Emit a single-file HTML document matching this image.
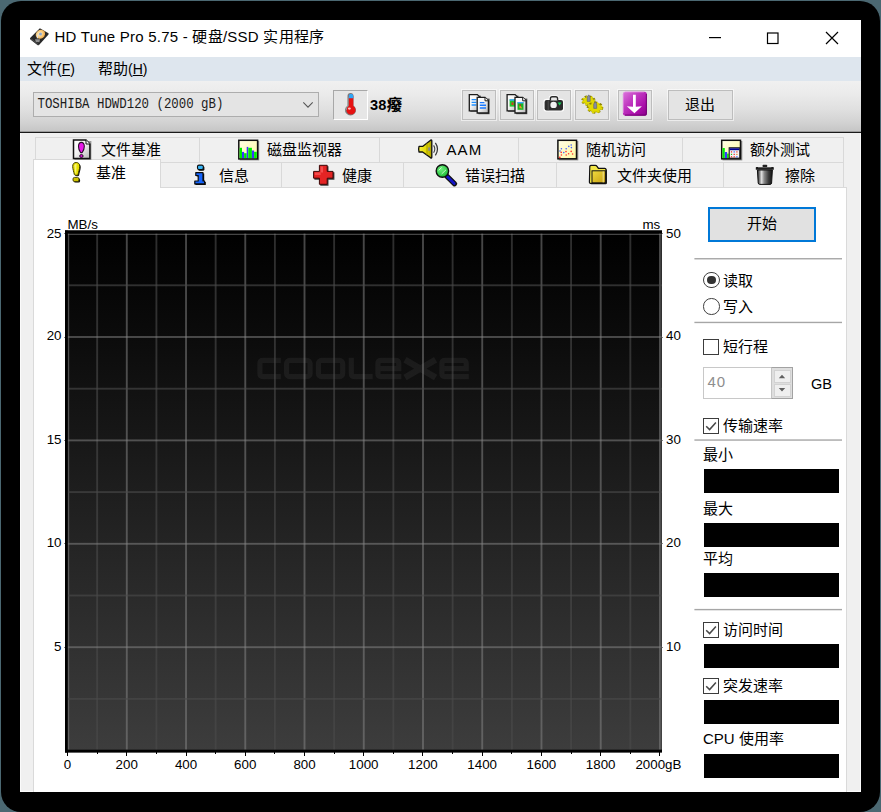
<!DOCTYPE html>
<html lang="zh-CN">
<head>
<meta charset="utf-8">
<title>HD Tune Pro 5.75</title>
<style>
html,body{margin:0;padding:0}
body{width:881px;height:812px;overflow:hidden;background:#4b6872;position:relative;font-family:"Liberation Sans",sans-serif;font-size:15px;color:#000}
div,span{box-sizing:border-box}
.abs,.frame,.win,.t,.tab,.box,.sep,.cb,.rb,.tbtn,.ico{position:absolute}
.frame{left:1px;top:1px;width:879px;height:810.5px;background:#000;border-radius:20px}
.win{left:20px;top:20px;width:841px;height:772px;background:#f0f0f0;overflow:hidden}
.t{white-space:nowrap;line-height:20px;height:20px}
/* title */
#title{left:0;top:0;width:841px;height:37px;background:#fff}
#menu{left:0;top:37px;width:841px;height:24px;background:#dee6ee}
#tool{left:0;top:61px;width:841px;height:51px;background:linear-gradient(#f0f0f0 0%,#ebebeb 25%,#e0e0e0 55%,#d3d3d3 80%,#c5c5c5 100%)}
#toolline{left:0;top:111px;width:841px;height:2px;background:linear-gradient(rgba(0,0,0,.22) 0 50%,#1a1a1a 50% 100%)}
#edgeL{left:0;top:113px;width:1px;height:660px;background:#fbfbfb}
#edgeR{left:840px;top:113px;width:1px;height:660px;background:#fbfbfb}
/* tabs */
.tab{background:#f0f0f0;border:1px solid #d9d9d9;border-bottom:none}
.tab.sel{background:#fff}
#page{left:13px;top:167px;width:814px;height:610px;background:#fff;border:1px solid #dadada;border-bottom:none}
/* chart */
#chart{left:65px;top:230px;width:597px;height:523px;overflow:hidden}
.yl,.yr,.xl{position:absolute;font-size:13.33px;line-height:16px;height:16px;white-space:nowrap}
.yl{left:30px;width:31.5px;text-align:right}
.yr{left:666px;text-align:left}
.xl{width:60px;text-align:center;top:756.5px}
.tk{position:absolute;background:#000}
.box{background:#000;left:703.5px;width:135px;height:24px}
.cb{left:703.2px;width:16px;height:16px;border:1.2px solid #3c3c3c;background:#fff}
.rb{left:703.2px;width:16.4px;height:16.4px;border:1.3px solid #404040;background:#fff;border-radius:50%}
.tbtn{top:89.5px;width:34px;height:30px;border:1px solid #bdbdbd;background:#e4e4e4;box-shadow:0 0 0 1px rgba(255,255,255,.55)}
</style>
</head>
<body>
<div class="frame"></div>
<div class="win">
  <div class="abs" id="title"></div>
  <div class="abs" id="menu"></div>
  <div class="abs" id="tool"></div>
  <div class="abs" id="toolline"></div>
  <div class="abs" id="edgeL"></div>
  <div class="abs" id="edgeR"></div>
  <div class="abs" style="left:0;top:771px;width:841px;height:1px;background:#fbfbfb"></div>
  <!-- tab row 1 -->
  <div class="tab" style="left:15px;top:117px;width:165px;height:26px"></div>
  <div class="tab" style="left:179px;top:117px;width:181px;height:26px"></div>
  <div class="tab" style="left:359px;top:117px;width:140px;height:26px"></div>
  <div class="tab" style="left:498px;top:117px;width:165px;height:26px"></div>
  <div class="tab" style="left:662px;top:117px;width:162px;height:26px"></div>
  <!-- tab row 2 -->
  <div class="tab" style="left:140px;top:142px;width:122px;height:26px"></div>
  <div class="tab" style="left:261px;top:142px;width:123px;height:26px"></div>
  <div class="tab" style="left:383px;top:142px;width:154px;height:26px"></div>
  <div class="tab" style="left:536px;top:142px;width:168px;height:26px"></div>
  <div class="tab" style="left:703px;top:142px;width:121px;height:26px"></div>
  <div class="abs" id="page"></div>
  <div class="tab sel" style="left:13px;top:139px;width:128px;height:29px"></div>
</div>

<!-- title text -->
<div class="t" id="ttl" style="left:54.5px;top:27px;font-size:15px;letter-spacing:.24px">HD Tune Pro 5.75 - 硬盘/SSD 实用程序</div>
<!-- menu -->
<div class="t" id="m1" style="left:27px;top:58.5px">文件<span style="font-size:14px">(<u>F</u>)</span></div>
<div class="t" id="m2" style="left:98px;top:58.5px">帮助<span style="font-size:14px">(<u>H</u>)</span></div>

<!-- combo -->
<div class="abs" style="left:33px;top:92px;width:285.5px;height:24.5px;border:1px solid #adadad;background:#e4e4e4"></div>
<div class="t" id="combo" style="left:37.5px;top:94.5px;font-family:'Liberation Mono',monospace;font-size:12.4px;color:#1c1c1c;transform:scaleY(1.14);transform-origin:0 74%">TOSHIBA HDWD120 (2000 gB)</div>
<svg class="abs" style="left:301px;top:100px" width="14" height="10" viewBox="0 0 14 10"><path d="M2.3 2.4 L7 7.2 L11.7 2.4" fill="none" stroke="#555" stroke-width="1.05"/></svg>

<!-- temperature -->
<div class="abs" style="left:333px;top:89.5px;width:34.5px;height:30.5px;border:1px solid #a8a8a8;border-right-color:#fff;border-bottom-color:#fff;background:#e6e6e6"></div>
<div class="t" id="temp" style="left:370px;top:94.5px;font-weight:bold;font-size:14.6px;letter-spacing:.2px">38<span style="font-size:15px;font-weight:900;letter-spacing:0">癈</span></div>

<!-- toolbar buttons -->
<div class="tbtn" style="left:462px"></div>
<div class="tbtn" style="left:499.5px"></div>
<div class="tbtn" style="left:537px"></div>
<div class="tbtn" style="left:574.5px"></div>
<div class="tbtn" style="left:618px"></div>
<div class="tbtn" style="left:668px;width:65px"></div>
<div class="t" id="exit" style="left:685px;top:94.5px">退出</div>

<!-- tab labels row 1 -->
<div class="t" style="left:101px;top:140px">文件基准</div>
<div class="t" style="left:266.5px;top:140px">磁盘监视器</div>
<div class="t" style="left:446.5px;top:140px;letter-spacing:1.1px">AAM</div>
<div class="t" style="left:586px;top:140px">随机访问</div>
<div class="t" style="left:749.5px;top:140px">额外测试</div>
<!-- tab labels row 2 -->
<div class="t" style="left:95.5px;top:163px">基准</div>
<div class="t" style="left:218.5px;top:165.5px">信息</div>
<div class="t" style="left:342px;top:165.5px">健康</div>
<div class="t" style="left:464.5px;top:165.5px">错误扫描</div>
<div class="t" style="left:617px;top:165.5px">文件夹使用</div>
<div class="t" style="left:785px;top:165.5px">擦除</div>

<!-- chart -->
<div class="abs" id="chart">
<svg class="abs" id="wm" style="left:0;top:0" width="597" height="523" viewBox="65 230 597 523"><defs><linearGradient id="gbg" x1="0" y1="0" x2="0" y2="1"><stop offset="0" stop-color="#000"/><stop offset=".2" stop-color="#0b0b0b"/><stop offset="1" stop-color="#3d3d3d"/></linearGradient></defs><rect x="65" y="230.5" width="597" height="522" fill="url(#gbg)"/><g fill="none" stroke="#fff" stroke-opacity=".055" stroke-width="5.2">
<path d="M280.8 360.4 H263 Q259.9 360.4 259.9 363.5 V373.6 Q259.9 376.7 263 376.7 H280.8"/>
<rect x="286.6" y="360.4" width="23.5" height="16.3" rx="3.2"/>
<rect x="318.4" y="360.4" width="24.3" height="16.3" rx="3.2"/>
<path d="M351.3 357.8 V373.6 Q351.3 376.7 354.4 376.7 H372.7"/>
<path d="M401.4 376.7 H381 Q377.9 376.7 377.9 373.6 V363.5 Q377.9 360.4 381 360.4 H395.7 Q398.8 360.4 398.8 363.5 V368.6 H380.5"/>
<path d="M405 359.8 L435.6 377.4 M435.6 359.8 L405 377.4" stroke-width="6.4"/>
<path d="M468.8 376.7 H445 Q441.9 376.7 441.9 373.6 V363.5 Q441.9 360.4 445 360.4 H463.1 Q466.2 360.4 466.2 363.5 V368.6 H444.5"/>
</g></svg>
<svg class="abs" style="left:0;top:0" width="597" height="523" viewBox="65 230 597 523">
<rect x="67.70" y="233.2" width="1.5" height="517" fill="#868686" fill-opacity=".52"/>
<rect x="96.22" y="233.2" width="1.9" height="517" fill="#4a4a4a" fill-opacity=".62"/>
<rect x="125.84" y="233.2" width="1.9" height="517" fill="#868686" fill-opacity=".52"/>
<rect x="155.46" y="233.2" width="1.9" height="517" fill="#4a4a4a" fill-opacity=".62"/>
<rect x="185.08" y="233.2" width="1.9" height="517" fill="#868686" fill-opacity=".52"/>
<rect x="214.70" y="233.2" width="1.9" height="517" fill="#4a4a4a" fill-opacity=".62"/>
<rect x="244.32" y="233.2" width="1.9" height="517" fill="#868686" fill-opacity=".52"/>
<rect x="273.94" y="233.2" width="1.9" height="517" fill="#4a4a4a" fill-opacity=".62"/>
<rect x="303.56" y="233.2" width="1.9" height="517" fill="#868686" fill-opacity=".52"/>
<rect x="333.18" y="233.2" width="1.9" height="517" fill="#4a4a4a" fill-opacity=".62"/>
<rect x="362.80" y="233.2" width="1.9" height="517" fill="#868686" fill-opacity=".52"/>
<rect x="392.42" y="233.2" width="1.9" height="517" fill="#4a4a4a" fill-opacity=".62"/>
<rect x="422.04" y="233.2" width="1.9" height="517" fill="#868686" fill-opacity=".52"/>
<rect x="451.66" y="233.2" width="1.9" height="517" fill="#4a4a4a" fill-opacity=".62"/>
<rect x="481.28" y="233.2" width="1.9" height="517" fill="#868686" fill-opacity=".52"/>
<rect x="510.90" y="233.2" width="1.9" height="517" fill="#4a4a4a" fill-opacity=".62"/>
<rect x="540.52" y="233.2" width="1.9" height="517" fill="#868686" fill-opacity=".52"/>
<rect x="570.14" y="233.2" width="1.9" height="517" fill="#4a4a4a" fill-opacity=".62"/>
<rect x="599.76" y="233.2" width="1.9" height="517" fill="#868686" fill-opacity=".52"/>
<rect x="629.38" y="233.2" width="1.9" height="517" fill="#4a4a4a" fill-opacity=".62"/>
<rect x="659.00" y="233.2" width="1.9" height="517" fill="#868686" fill-opacity=".52"/>
<rect x="67.5" y="233.50" width="594.5" height="1.5" fill="#868686" fill-opacity=".52"/>
<rect x="67.5" y="284.35" width="594.5" height="1.9" fill="#4a4a4a" fill-opacity=".62"/>
<rect x="67.5" y="336.05" width="594.5" height="1.9" fill="#868686" fill-opacity=".52"/>
<rect x="67.5" y="387.75" width="594.5" height="1.9" fill="#4a4a4a" fill-opacity=".62"/>
<rect x="67.5" y="439.45" width="594.5" height="1.9" fill="#868686" fill-opacity=".52"/>
<rect x="67.5" y="491.15" width="594.5" height="1.9" fill="#4a4a4a" fill-opacity=".62"/>
<rect x="67.5" y="542.85" width="594.5" height="1.9" fill="#868686" fill-opacity=".52"/>
<rect x="67.5" y="594.55" width="594.5" height="1.9" fill="#4a4a4a" fill-opacity=".62"/>
<rect x="67.5" y="646.25" width="594.5" height="1.9" fill="#868686" fill-opacity=".52"/>
<rect x="67.5" y="697.95" width="594.5" height="1.9" fill="#4a4a4a" fill-opacity=".62"/>
<rect x="67.5" y="749.65" width="594.5" height="1.9" fill="#868686" fill-opacity=".52"/>
<rect x="660.6" y="233.2" width="1.4" height="517" fill="#484848" fill-opacity=".62"/>
<rect x="65" y="230.5" width="2.7" height="522" fill="#000"/><rect x="65" y="230.5" width="597" height="3" fill="#000"/><rect x="65" y="749.6" width="597" height="2.8" fill="#000"/>
</svg>
</div>
<div class="yl" style="left:67.5px;top:216.5px;width:auto">MB/s</div>
<div class="yl" style="left:642.5px;top:216.5px;width:auto">ms</div>
<div class="yl" style="top:226.0px">25</div>
<div class="tk" style="left:63.6px;top:233.2px;width:1.5px;height:1px;background:#8a8a8a"></div>
<div class="yl" style="top:328.4px">20</div>
<div class="tk" style="left:63.6px;top:336.6px;width:1.5px;height:1px;background:#8a8a8a"></div>
<div class="yl" style="top:431.8px">15</div>
<div class="tk" style="left:63.6px;top:440.0px;width:1.5px;height:1px;background:#8a8a8a"></div>
<div class="yl" style="top:535.2px">10</div>
<div class="tk" style="left:63.6px;top:543.4px;width:1.5px;height:1px;background:#8a8a8a"></div>
<div class="yl" style="top:638.6px">5</div>
<div class="tk" style="left:63.6px;top:646.8px;width:1.5px;height:1px;background:#8a8a8a"></div>
<div class="yr" style="top:226.0px">50</div>
<div class="tk" style="left:661.8px;top:233.2px;width:1.6px;height:1px;background:#8a8a8a"></div>
<div class="yr" style="top:328.4px">40</div>
<div class="tk" style="left:661.8px;top:336.6px;width:1.6px;height:1px;background:#8a8a8a"></div>
<div class="yr" style="top:431.8px">30</div>
<div class="tk" style="left:661.8px;top:440.0px;width:1.6px;height:1px;background:#8a8a8a"></div>
<div class="yr" style="top:535.2px">20</div>
<div class="tk" style="left:661.8px;top:543.4px;width:1.6px;height:1px;background:#8a8a8a"></div>
<div class="yr" style="top:638.6px">10</div>
<div class="tk" style="left:661.8px;top:646.8px;width:1.6px;height:1px;background:#8a8a8a"></div>
<div class="xl" style="left:37.5px">0</div>
<div class="tk" style="left:67.0px;top:752px;width:1px;height:4px"></div>
<div class="tk" style="left:96.6px;top:752px;width:1px;height:2px"></div>
<div class="xl" style="left:96.7px">200</div>
<div class="tk" style="left:126.2px;top:752px;width:1px;height:4px"></div>
<div class="tk" style="left:155.9px;top:752px;width:1px;height:2px"></div>
<div class="xl" style="left:156.0px">400</div>
<div class="tk" style="left:185.5px;top:752px;width:1px;height:4px"></div>
<div class="tk" style="left:215.1px;top:752px;width:1px;height:2px"></div>
<div class="xl" style="left:215.2px">600</div>
<div class="tk" style="left:244.7px;top:752px;width:1px;height:4px"></div>
<div class="tk" style="left:274.3px;top:752px;width:1px;height:2px"></div>
<div class="xl" style="left:274.5px">800</div>
<div class="tk" style="left:304.0px;top:752px;width:1px;height:4px"></div>
<div class="tk" style="left:333.6px;top:752px;width:1px;height:2px"></div>
<div class="xl" style="left:333.7px">1000</div>
<div class="tk" style="left:363.2px;top:752px;width:1px;height:4px"></div>
<div class="tk" style="left:392.8px;top:752px;width:1px;height:2px"></div>
<div class="xl" style="left:392.9px">1200</div>
<div class="tk" style="left:422.4px;top:752px;width:1px;height:4px"></div>
<div class="tk" style="left:452.1px;top:752px;width:1px;height:2px"></div>
<div class="xl" style="left:452.2px">1400</div>
<div class="tk" style="left:481.7px;top:752px;width:1px;height:4px"></div>
<div class="tk" style="left:511.3px;top:752px;width:1px;height:2px"></div>
<div class="xl" style="left:511.4px">1600</div>
<div class="tk" style="left:540.9px;top:752px;width:1px;height:4px"></div>
<div class="tk" style="left:570.5px;top:752px;width:1px;height:2px"></div>
<div class="xl" style="left:570.7px">1800</div>
<div class="tk" style="left:600.2px;top:752px;width:1px;height:4px"></div>
<div class="tk" style="left:629.8px;top:752px;width:1px;height:2px"></div>
<div class="xl" style="left:628.4px">2000gB</div>
<div class="tk" style="left:659.4px;top:752px;width:1px;height:4px"></div>

<!-- right panel -->
<div class="abs" style="left:708px;top:207px;width:108px;height:35px;border:2px solid #0078d7;background:#e1e1e1"></div>
<div class="t" style="left:746.5px;top:214px">开始</div>

<div class="rb" style="top:271.8px"></div><div class="abs" style="left:707.2px;top:275.8px;width:8.4px;height:8.4px;border-radius:50%;background:#333"></div>
<div class="t" style="left:722.6px;top:270.5px">读取</div>
<div class="rb" style="top:298.3px"></div>
<div class="t" style="left:722.6px;top:296.8px">写入</div>

<div class="cb" style="top:338.5px"></div>
<div class="t" style="left:723px;top:336.5px">短行程</div>
<div class="abs" style="left:703px;top:367px;width:90px;height:32px;border:1px solid #c8c8c8;background:#fff"></div>
<div class="abs" style="left:771px;top:367px;width:22px;height:32px;background:#dedede;border:1px solid #a2a2a2;border-left-color:#c4c4c4"></div>
<div class="abs" style="left:773.5px;top:369.5px;width:17.5px;height:13px;background:#efefef;border:1px solid #d2d2d2"></div>
<div class="abs" style="left:773.5px;top:383.5px;width:17.5px;height:13px;background:#efefef;border:1px solid #d2d2d2"></div>
<svg class="abs" style="left:777px;top:372px" width="10" height="22" viewBox="0 0 10 22"><path d="M1.8 6.2 L5 2.8 L8.2 6.2Z M1.8 16 L5 19.4 L8.2 16Z" fill="#606060"/></svg>
<div class="t" style="left:707.5px;top:372px;color:#8e8e8e;letter-spacing:1px">40</div>
<div class="t" style="left:811px;top:374px;font-size:14.5px">GB</div>
<div class="cb" style="top:418px"></div><svg class="abs" style="left:703.2px;top:418px" width="16" height="16" viewBox="0 0 16 16"><path d="M3.2 8.2 L6.6 11.6 L12.9 4.4" fill="none" stroke="#484848" stroke-width="1.5"/></svg>
<div class="t" style="left:723px;top:416px">传输速率</div>

<div class="t" style="left:703px;top:444.5px">最小</div>
<div class="box" style="top:469px"></div>
<div class="t" style="left:703px;top:499px">最大</div>
<div class="box" style="top:522.6px"></div>
<div class="t" style="left:703px;top:549px">平均</div>
<div class="box" style="top:572.7px"></div>

<div class="cb" style="top:621.6px"></div><svg class="abs" style="left:703.2px;top:621.6px" width="16" height="16" viewBox="0 0 16 16"><path d="M3.2 8.2 L6.6 11.6 L12.9 4.4" fill="none" stroke="#484848" stroke-width="1.5"/></svg>
<div class="t" style="left:723px;top:619.5px">访问时间</div>
<div class="box" style="top:643.8px"></div>
<div class="cb" style="top:678.2px"></div><svg class="abs" style="left:703.2px;top:678.2px" width="16" height="16" viewBox="0 0 16 16"><path d="M3.2 8.2 L6.6 11.6 L12.9 4.4" fill="none" stroke="#484848" stroke-width="1.5"/></svg>
<div class="t" style="left:723px;top:676px">突发速率</div>
<div class="box" style="top:700px"></div>
<div class="t" style="left:703px;top:729px">CPU 使用率</div>
<div class="box" style="top:753.8px"></div>

<svg class="abs" style="left:0;top:0;pointer-events:none" width="881" height="812" viewBox="0 0 881 812">
<defs>
 <linearGradient id="gdoc" x1="0" y1="0" x2="1" y2="1"><stop offset="0" stop-color="#fff"/><stop offset=".45" stop-color="#f4f4f4"/><stop offset="1" stop-color="#b4b4b4"/></linearGradient>
 <linearGradient id="gmag" x1="0" y1="0" x2="1" y2="1"><stop offset="0" stop-color="#dc78dc"/><stop offset=".35" stop-color="#c23cc2"/><stop offset=".7" stop-color="#ac10ac"/><stop offset="1" stop-color="#8a008a"/></linearGradient>
 <radialGradient id="gdisc" cx=".45" cy=".42" r=".62"><stop offset="0" stop-color="#fff2cc"/><stop offset=".55" stop-color="#f8cc80"/><stop offset="1" stop-color="#eaa040"/></radialGradient>
 <linearGradient id="gtrash" x1="0" y1="0" x2="1" y2="0"><stop offset="0" stop-color="#1a1a1a"/><stop offset=".28" stop-color="#e0e0e0"/><stop offset=".45" stop-color="#8a8a8a"/><stop offset=".75" stop-color="#3a3a3a"/><stop offset="1" stop-color="#111"/></linearGradient>
 <linearGradient id="gyel" x1="0" y1="0" x2="1" y2="0"><stop offset="0" stop-color="#f4ee40"/><stop offset=".6" stop-color="#e4da00"/><stop offset="1" stop-color="#a89c00"/></linearGradient>
 <linearGradient id="gfold" x1="0" y1="0" x2="1" y2="1"><stop offset="0" stop-color="#f0dc40"/><stop offset="1" stop-color="#c8a010"/></linearGradient>
 <radialGradient id="glens" cx=".4" cy=".35" r=".7"><stop offset="0" stop-color="#70f080"/><stop offset="1" stop-color="#18b830"/></radialGradient>
 <linearGradient id="gchartbg" x1="0" y1="0" x2="1" y2="1"><stop offset="0" stop-color="#ffffe8"/><stop offset="1" stop-color="#fff8a0"/></linearGradient>
</defs>

<!-- separators -->
<g id="seps"><rect x="694.4" y="258.05" width="147.6" height="1.4" fill="#a6a6a6"/><rect x="694.4" y="321.75" width="147.6" height="1.4" fill="#a6a6a6"/><rect x="694.4" y="439.35" width="147.6" height="1.4" fill="#a6a6a6"/><rect x="694.4" y="608.9" width="147.6" height="1.4" fill="#a6a6a6"/></g>
<!-- title icon: hard disk -->
<g id="i-hdd">
 <path d="M39.9 28.2 L48.5 33.3 Q48.9 34 48.3 34.8 L39 45 Q38.2 45.5 37.4 44.9 L30.1 39.2 Q29.7 38.4 30.4 37.7 Z" fill="#282828"/>
 <path d="M31 39.4 L38.2 45 L38.8 44.3 L31.5 38.6Z" fill="#4c4c4c"/>
 <ellipse cx="40.4" cy="34.3" rx="4.9" ry="4.3" transform="rotate(-38 40.4 34.3)" fill="url(#gdisc)"/>
 <circle cx="40.5" cy="33.9" r="1.5" fill="#8eaad2"/>
 <path d="M37.9 34.4 L37.3 38.4" stroke="#e4e4e4" stroke-width="1" fill="none"/>
 <path d="M35 39.2 L40 39.3 L39.4 42.2 L35.9 41.9Z" fill="#9c9c9c" opacity=".9"/>
</g>

<!-- thermometer -->
<g id="i-therm">
 <path d="M347.5 95.9 a3 3 0 0 1 6 0 V105.4 a5.5 5.5 0 1 1 -6 0 Z" fill="#7c7c7c"/>
 <path d="M348.7 96 a2.3 2.3 0 0 1 4.6 0 V106 a4.6 4.6 0 1 1 -4.6 0 Z" fill="#e61212"/>
 <path d="M348.7 98.2 V96 a2.3 2.3 0 0 1 4.6 0 V98.2 Z" fill="#2ea8f6"/>
 <path d="M348 97 V106 a4.6 4.6 0 0 0 -1.6 4" stroke="#9aa" stroke-width="1" fill="none" opacity=".7"/>
 <ellipse cx="349.4" cy="108.6" rx="1.5" ry="1.1" fill="#ffc0c0"/>
</g>

<!-- toolbar icon 1: copy text -->
<g id="i-copy1">
 <path d="M470.3 95.6 H481 V112 H470.3Z" fill="#111" opacity=".55"/>
 <path d="M469.3 94.6 H477.3 L480.3 97.6 V110.8 H469.3Z" fill="url(#gdoc)" stroke="#1c1c1c" stroke-width="1.3"/>
 <path d="M471.6 99.6 H476.4 M471.6 102.3 H476.4 M471.6 105 H476.4" stroke="#2090ff" stroke-width="1.3"/>
 <path d="M478.4 98.6 H489.6 V114.2 H478.4Z" fill="#111" opacity=".7"/>
 <path d="M477.2 97.4 H485 L488.4 100.8 V113 H477.2Z" fill="url(#gdoc)" stroke="#1c1c1c" stroke-width="1.3"/>
 <path d="M485 97.4 V100.8 H488.4" fill="#fff" stroke="#1c1c1c" stroke-width="1"/>
 <path d="M479.8 102.6 H484.4 M479.8 105.3 H486 M479.8 108 H486" stroke="#1878ff" stroke-width="1.4"/>
</g>

<!-- toolbar icon 2: copy image -->
<g id="i-copy2">
 <path d="M508.1 95.6 H518.5 V112 H508.1Z" fill="#111" opacity=".55"/>
 <path d="M507.1 94.6 H515.1 L518.1 97.6 V110.8 H507.1Z" fill="url(#gdoc)" stroke="#1c1c1c" stroke-width="1.3"/>
 <rect x="509.6" y="99.4" width="5.6" height="7.2" fill="#22c428"/>
 <rect x="509.6" y="99.2" width="5.6" height="1.5" fill="#38a8ff"/>
 <rect x="511.6" y="102.4" width="1.8" height="2.6" fill="#e03020"/>
 <path d="M516.2 98.6 H527.3 V114.2 H516.2Z" fill="#111" opacity=".7"/>
 <path d="M515 97.4 H522.7 L526.1 100.8 V113 H515Z" fill="url(#gdoc)" stroke="#1c1c1c" stroke-width="1.3"/>
 <path d="M522.7 97.4 V100.8 H526.1" fill="#fff" stroke="#1c1c1c" stroke-width="1"/>
 <rect x="517.5" y="102.2" width="6" height="7.6" fill="#1cb424"/>
 <rect x="517.5" y="102" width="6" height="1.4" fill="#38a8ff"/>
 <path d="M519.6 104.6 L522.4 108.6 L519.4 108Z" fill="#e8a020"/>
 <rect x="519.4" y="104.4" width="1.4" height="1.6" fill="#d02020"/>
</g>

<!-- toolbar icon 3: camera -->
<g id="i-cam">
 <g fill="#fff" stroke="#fff" stroke-width="2.4" stroke-linejoin="round" opacity=".95">
  <rect x="544.6" y="100" width="18.4" height="10.4" rx="2"/>
  <rect x="549.9" y="96.4" width="8" height="5" rx="2"/>
 </g>
 <rect x="544.6" y="100" width="18.4" height="10.4" rx="2" fill="#2c2c2c"/>
 <path d="M550.4 100.4 V98.6 a1.8 1.8 0 0 1 1.8 -1.8 H555.8 a1.8 1.8 0 0 1 1.8 1.8 V100.4" fill="#e8e8e8" stroke="#2c2c2c" stroke-width="1.4"/>
 <path d="M548.2 100.4 V110.2" stroke="#5a5a5a" stroke-width=".8"/>
 <circle cx="553.6" cy="104.9" r="3.2" fill="#f2f2f2"/>
 <path d="M557.7 102.4 H561.5 L559.6 105.5Z" fill="#10d458"/>
</g>

<!-- toolbar icon 4: gears -->
<g id="i-gear">
 <g transform="translate(588.4 100.6) scale(1.1 .8)">
  <circle r="5.3" fill="none" stroke="#8a8200" stroke-width="2.4" stroke-dasharray="2.2 2"/>
  <circle r="4.8" fill="#e2da00" stroke="#9a9200" stroke-width=".6"/>
  <circle r="5" fill="none" stroke="#e2da00" stroke-width="1.9" stroke-dasharray="2 2.2" stroke-dashoffset="-.1"/>
 </g>
 <path d="M587.2 101.4 V97 L588.7 94.8 L590.2 97 V101.4Z" fill="#868ca4" stroke="#50546a" stroke-width=".5"/>
 <g transform="translate(595 107.6) scale(1.15 .84)">
  <circle r="6" fill="none" stroke="#8a8200" stroke-width="2.4" stroke-dasharray="2.4 2.2"/>
  <circle r="5.5" fill="#e2da00" stroke="#9a9200" stroke-width=".6"/>
  <circle r="5.7" fill="none" stroke="#e2da00" stroke-width="1.9" stroke-dasharray="2.2 2.4" stroke-dashoffset="-.1"/>
 </g>
 <path d="M593.7 108.4 V104 L595.2 101.8 L596.7 104 V108.4Z" fill="#868ca4" stroke="#50546a" stroke-width=".5"/>
</g>

<!-- toolbar icon 5: magenta arrow -->
<g id="i-down">
 <rect x="622.9" y="91.7" width="24" height="24" rx="2.6" fill="url(#gmag)"/>
 <path d="M623.4 113 V94 a2 2 0 0 1 2 -2 H644" fill="none" stroke="#e8a0e8" stroke-width="1" opacity=".6"/>
 <path d="M625 115.2 H644.4 a2 2 0 0 0 2 -2 V94" fill="none" stroke="#700070" stroke-width="1.2" opacity=".8"/>
 <path d="M633 94.7 H635.8 V106.8 L641.9 106.3 L634.4 113.3 L626.8 106.3 L633 106.8Z" fill="#fff"/>
</g>

<!-- tab icon: file benchmark -->
<g id="i-filebench">
 <path d="M74.4 141 H91.4 V159.9 H74.4Z" fill="#000" opacity=".35"/>
 <path d="M73.5 140.1 H86 L89.9 144 V158.4 H73.5Z" fill="url(#gdoc)" stroke="#111" stroke-width="1.5"/>
 <path d="M86 140.1 V144 H89.9" fill="#fff" stroke="#111" stroke-width="1"/>
 <path d="M81.4 142.4 C83.5 142.4 84.3 144.4 84.3 146.6 C84.3 149 83 151.4 82.4 152.2 Q81.4 153 80.4 152.2 C79.8 151.4 78.5 149 78.5 146.6 C78.5 144.4 79.3 142.4 81.4 142.4Z" fill="#e818e8" stroke="#2c0c2c" stroke-width="1.1"/>
 <ellipse cx="81.4" cy="156" rx="1.7" ry="1.5" fill="#d414d4" stroke="#2c0c2c" stroke-width="1"/>
</g>

<!-- tab icon: disk monitor chart -->
<g id="i-mon">
 <rect x="239.6" y="141" width="19.6" height="19.4" fill="#000" opacity=".4"/>
 <rect x="238.8" y="140.3" width="18.8" height="18.6" fill="url(#gchartbg)" stroke="#111" stroke-width="1.5"/>
 <rect x="239.6" y="147.8" width="2.4" height="10.4" fill="#00ee00"/>
 <rect x="242" y="151.9" width="2.1" height="6.3" fill="#3838ff"/>
 <rect x="244.1" y="153.2" width="2.6" height="5" fill="#00ee00"/>
 <rect x="246.7" y="146.9" width="1.6" height="11.3" fill="#3838ff"/>
 <rect x="248.3" y="147.8" width="3.6" height="10.4" fill="#00ee00"/>
 <rect x="251.9" y="150.5" width="2.2" height="7.7" fill="#3838ff"/>
 <rect x="254.1" y="151.8" width="2.7" height="6.4" fill="#00ee00"/>
</g>

<!-- tab icon: AAM speaker -->
<g id="i-spk">
 <path d="M419 146.4 H422.6 L430.6 140.2 Q431.8 139.6 431.8 141 V157 Q431.8 158.4 430.6 157.8 L422.6 152 H419 Q418.2 149.2 419 146.4Z" fill="url(#gyel)" stroke="#111" stroke-width="1.3" stroke-linejoin="round"/>
 <path d="M427 143.4 V154.8" stroke="#a09400" stroke-width=".9"/>
 <rect x="428.2" y="147.4" width="1.8" height="3.4" fill="#888"/>
 <path d="M433.6 145.4 Q436 149 433.6 152.8" fill="none" stroke="#444" stroke-width="1.1"/>
 <path d="M435.4 142.8 Q439.6 149 435.4 155.4" fill="none" stroke="#333" stroke-width="1.2"/>
</g>

<!-- tab icon: random access scatter -->
<g id="i-scat">
 <rect x="558.7" y="141" width="19.6" height="19.4" fill="#000" opacity=".4"/>
 <rect x="557.9" y="140.3" width="18.6" height="18.5" fill="url(#gchartbg)" stroke="#111" stroke-width="1.5"/>
 <g fill="#ff3030"><circle cx="559.8" cy="157.4" r=".9"/><circle cx="561.2" cy="152.4" r=".8"/><circle cx="561.4" cy="155" r=".8"/><circle cx="566" cy="151.6" r=".8"/><circle cx="566.2" cy="155" r=".8"/><circle cx="568.6" cy="153.8" r=".8"/><circle cx="571.2" cy="151.4" r=".8"/><circle cx="572.6" cy="154" r=".8"/></g>
 <g fill="#4060ff"><circle cx="560" cy="151" r=".8"/><circle cx="561.4" cy="148.8" r=".8"/><circle cx="563.8" cy="152.6" r=".8"/><circle cx="566.2" cy="148.8" r=".8"/><circle cx="568.8" cy="146.4" r=".8"/><circle cx="571.2" cy="145" r=".8"/><circle cx="571.4" cy="147.6" r=".8"/></g>
</g>

<!-- tab icon: extra tests -->
<g id="i-extra">
 <rect x="722.5" y="141" width="19.8" height="19.4" fill="#000" opacity=".4"/>
 <rect x="721.7" y="140.3" width="18.8" height="18.5" fill="url(#gchartbg)" stroke="#111" stroke-width="1.5"/>
 <rect x="722.5" y="148" width="2.3" height="10.1" fill="#00ee00"/>
 <rect x="724.8" y="152" width="2.3" height="6.1" fill="#3838ff"/>
 <rect x="727.1" y="153.6" width="1.6" height="4.5" fill="#00ee00"/>
 <rect x="729.2" y="147.8" width="10.6" height="10.4" fill="#f4f4f4" stroke="#111" stroke-width="1.1"/>
 <rect x="729.7" y="148.3" width="9.6" height="1.9" fill="#000090"/>
 <g fill="#f02020"><rect x="730.9" y="151.3" width="1.2" height="1.2"/><rect x="736.3" y="151.3" width="1.2" height="1.2"/><rect x="733.6" y="153.8" width="1.2" height="1.2"/><rect x="730.9" y="156.2" width="1.2" height="1.2"/><rect x="733.6" y="156.2" width="1.2" height="1.2"/></g>
 <g fill="#3050ff"><rect x="733.6" y="151.3" width="1.2" height="1.2"/><rect x="736.3" y="156.2" width="1.2" height="1.2"/></g>
 <g fill="#20c020"><rect x="730.9" y="153.8" width="1.2" height="1.2"/></g>
 <g fill="#f08020"><rect x="736.3" y="153.8" width="1.2" height="1.2"/></g>
</g>

<!-- tab icon: benchmark (yellow !) -->
<g id="i-bench">
 <path d="M72.7 166.4 C72.7 163.6 74.2 162.5 76.2 162.5 C78.2 162.5 79.7 163.6 79.7 166.4 C79.7 169 78.5 172 78.1 174.4 Q77.9 175.3 76.2 175.3 Q74.5 175.3 74.3 174.4 C73.9 172 72.7 169 72.7 166.4Z" fill="#0c0c0c" transform="translate(1 .9)"/>
 <path d="M72.7 166.4 C72.7 163.6 74.2 162.5 76.2 162.5 C78.2 162.5 79.7 163.6 79.7 166.4 C79.7 169 78.5 172 78.1 174.4 Q77.9 175.3 76.2 175.3 Q74.5 175.3 74.3 174.4 C73.9 172 72.7 169 72.7 166.4Z" fill="#e8e000" stroke="#3e3a00" stroke-width="1"/>
 <path d="M74.4 165.6 Q75 163.8 76.6 163.8 L76.2 173.4 L75.4 173.4Z" fill="#fdfa98" opacity=".8"/>
 <rect x="73.9" y="178.3" width="6.2" height="4.3" rx="1.6" fill="#0c0c0c"/>
 <rect x="73" y="177.4" width="6" height="4.2" rx="1.6" fill="#cfc400" stroke="#3e3a00" stroke-width=".9"/>
</g>

<!-- tab icon: info (blue i) -->
<g id="i-info">
 <rect x="198.2" y="165.9" width="6.2" height="4.9" rx="1.6" fill="#0c0c0c"/>
 <rect x="197.5" y="165.1" width="5.8" height="4.5" rx="1.5" fill="#36b4f6" stroke="#0c0c0c" stroke-width="1.1"/>
 <path d="M196.6 173.5 H204.2 V181.9 H205.8 V185 H195.4 V181.9 H199 V176.4 H196.6Z" fill="#0c0c0c"/>
 <path d="M195.8 172.7 H203 V181 H204.6 V183.9 H194.8 V181 H198.2 V175.5 H195.8Z" fill="#1464fc" stroke="#0c0c0c" stroke-width="1.2" stroke-linejoin="round"/>
</g>

<!-- tab icon: health (red cross) -->
<g id="i-health">
 <path d="M320.3 166.2 H328.5 V172.3 H334.4 V179.7 H328.5 V185.7 H320.3 V179.7 H314.4 V172.3 H320.3Z" fill="#111" opacity=".8"/>
 <path d="M319.4 165.3 H327.2 V171.4 H333 V178.2 H327.2 V184.3 H319.4 V178.2 H313.6 V171.4 H319.4Z" fill="#e42424" stroke="#3a0808" stroke-width="1" stroke-linejoin="round"/>
 <path d="M320.6 166.6 H323 V172.6 H314.8 V175 H320.6Z" fill="#ff7070" opacity=".55"/>
</g>

<!-- tab icon: error scan (magnifier) -->
<g id="i-mag">
 <path d="M446.8 176.2 L454.6 183.8" stroke="#111" stroke-width="5.2" stroke-linecap="round"/>
 <path d="M447.2 176.6 L454.2 183.4" stroke="#1414c8" stroke-width="2.8" stroke-linecap="round"/>
 <circle cx="442.4" cy="171" r="6.2" fill="url(#glens)" stroke="#111" stroke-width="1.4"/>
 <path d="M438.6 170.4 L441.6 167.4 M441.6 174 L446 169.8" stroke="#d8ffd8" stroke-width="1" opacity=".85"/>
</g>

<!-- tab icon: folder usage -->
<g id="i-folder">
 <path d="M589.8 166.4 Q590 165.4 591.2 165.4 H595.2 Q596.4 165.4 597.2 166.6 L598.4 168.4 H604.8 Q606 168.4 606 169.6 V182.2 Q606 183.4 604.8 183.4 H590.6 Q589.4 183.4 589.4 182.2Z" fill="#111" transform="translate(.9 .8)"/>
 <path d="M589.8 166.4 Q590 165.4 591.2 165.4 H595.2 Q596.4 165.4 597.2 166.6 L598.4 168.4 H604.8 Q606 168.4 606 169.6 V182.2 Q606 183.4 604.8 183.4 H590.6 Q589.4 183.4 589.4 182.2Z" fill="#f2e648" stroke="#111" stroke-width="1.2" stroke-linejoin="round"/>
 <rect x="592" y="170.8" width="13.4" height="12" fill="url(#gfold)" stroke="#111" stroke-width="1"/>
 <path d="M603.2 171.4 V182.4" stroke="#f4e8a0" stroke-width=".9"/>
</g>

<!-- tab icon: erase (trash) -->
<g id="i-trash">
 <rect x="762.6" y="164.8" width="4.6" height="2.6" rx=".8" fill="#222"/>
 <path d="M756.4 167 H773.2 Q773.8 167 773.8 167.8 V169.8 H755.8 V167.8 Q755.8 167 756.4 167Z" fill="#1a1a1a"/>
 <path d="M757.4 170 H772.4 L771.6 183 Q771.4 184.4 770 184.4 H759.8 Q758.4 184.4 758.2 183Z" fill="url(#gtrash)" stroke="#111" stroke-width="1"/>
 <path d="M758 167.6 H771.4" stroke="#777" stroke-width=".8"/>
</g>
</svg>

<!-- window controls -->
<svg class="abs" style="left:700px;top:25px" width="150" height="28" viewBox="0 0 150 28">
 <path d="M9 12.6 H21" stroke="#000" stroke-width="1.2" fill="none"/>
 <rect x="67.5" y="8" width="10.5" height="10.5" fill="none" stroke="#000" stroke-width="1.2"/>
 <path d="M126 7 L138 19 M138 7 L126 19" stroke="#000" stroke-width="1.2" fill="none"/>
</svg>
</body>
</html>
